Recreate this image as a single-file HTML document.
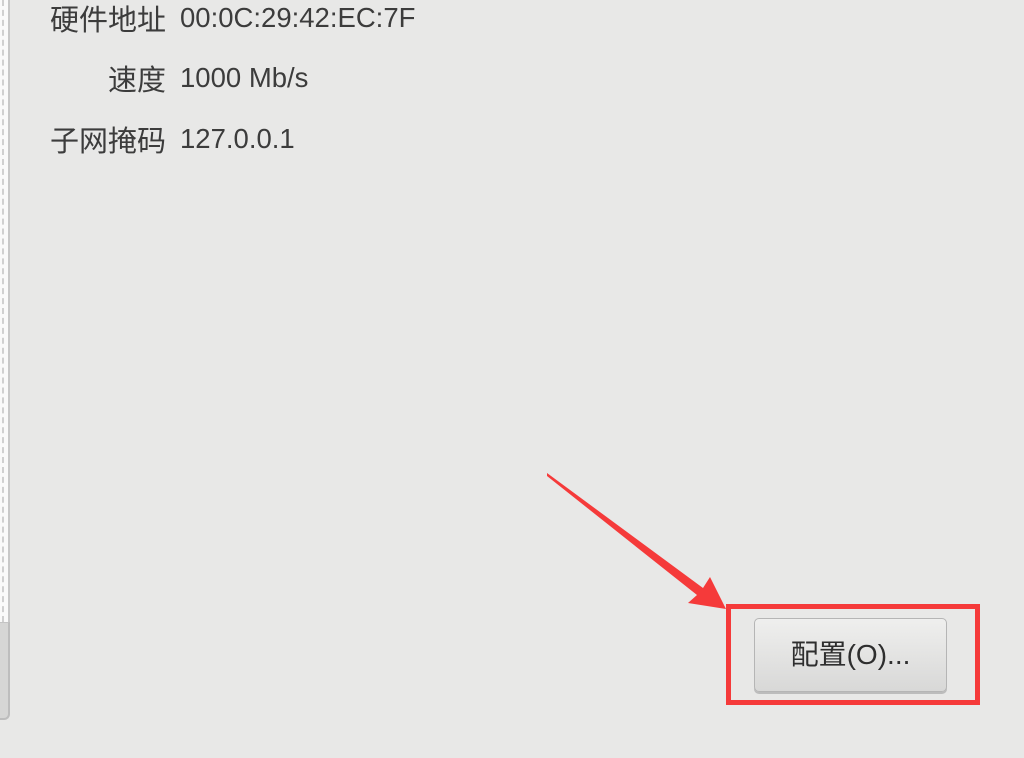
<!DOCTYPE html>
<html><head><meta charset="utf-8"><style>
body{margin:0;width:1024px;height:758px;background:#e8e8e7;position:relative;overflow:hidden;font-family:"Liberation Sans","Noto Sans CJK SC",sans-serif;color:#3c3c3c}
.strip{position:absolute;left:0;top:0;width:8px;height:622px;background:#fafafa;border-right:2px solid #c8c8c8}
.strip:before{content:"";position:absolute;left:2px;top:0;bottom:0;border-left:2px dashed #d0d0d0}
.strip2{position:absolute;left:0;top:622px;width:8px;height:95px;background:#d6d6d5;border-right:2px solid #bdbdbd;border-bottom:2px solid #bdbdbd;border-bottom-right-radius:6px;border-top:1px solid #c4c4c4}
.row{position:absolute;left:0;width:1024px;height:36px;font-size:27px;white-space:nowrap}
.lab{position:absolute;right:858px;top:0;font-family:"Noto Sans CJK SC",sans-serif;font-size:29px;line-height:36px}
.val{position:absolute;left:180px;top:0;line-height:36px;font-size:27.5px}
.box{position:absolute;left:726px;top:604px;width:244px;height:91px;border:5px solid #f53a3a}
.btn{position:absolute;left:754px;top:618px;width:191px;height:72px;border:1px solid #b5b5b5;border-radius:5px;background:linear-gradient(#efefee,#d8d8d7);box-shadow:0 2px 0 #bcbcbc;font-size:28px;text-align:center;line-height:72px;color:#2e2e2e}
</style></head><body>
<div class="strip"></div><div class="strip2"></div>
<div class="row" style="top:0px"><span class="lab">硬件地址</span><span class="val">00:0C:29:42:EC:7F</span></div>
<div class="row" style="top:60px"><span class="lab">速度</span><span class="val">1000 Mb/s</span></div>
<div class="row" style="top:121px"><span class="lab">子网掩码</span><span class="val">127.0.0.1</span></div>
<svg style="position:absolute;left:0;top:0" width="1024" height="758">
<polygon points="547,473 703,588 710,577 726,609 688,603 697,595 547,476" fill="#f53a3a"/>
</svg>
<div class="box"></div>
<div class="btn">配置(O)...</div>
</body></html>
